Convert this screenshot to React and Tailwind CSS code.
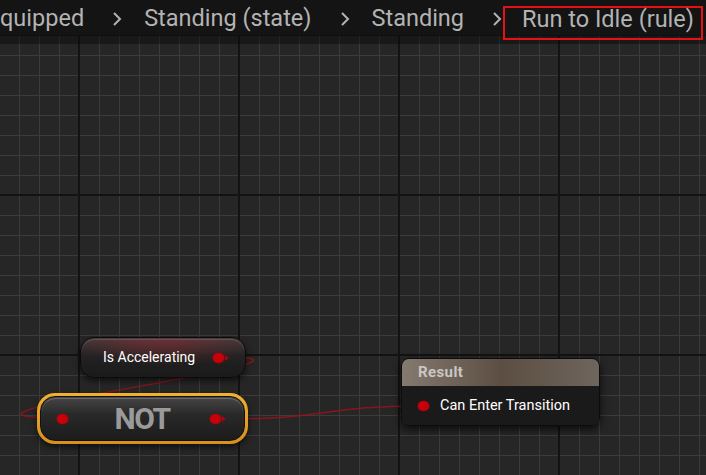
import React from 'react';

const Chevron = () => (
  <svg width="10" height="16" viewBox="0 0 10 16" className="mt-[11px] ml-[28px] mr-[22px] shrink-0">
    <polyline points="2,2 8,8 2,14" fill="none" stroke="#b3b3b3" strokeWidth="2" />
  </svg>
);

const Pin = ({ arrow = false }) => (
  <svg width="19" height="14" viewBox="0 0 19 14" className="shrink-0">
    <ellipse cx="6.5" cy="7" rx="6.5" ry="5.5" fill="#c00008" opacity="0.35" />
    <ellipse cx="6.5" cy="7" rx="5.5" ry="5" fill="#c8000a" />
    {arrow && <polygon points="13,4 17,7 13,10" fill="#b00008" />}
  </svg>
);

export default function App() {
  return (
    <div className="relative w-[706px] h-[475px] overflow-hidden bg-[#262626] bg-[linear-gradient(to_right,#131313_2px,transparent_2px),linear-gradient(to_bottom,#131313_2px,transparent_2px),linear-gradient(to_right,#3b3b3b_1px,transparent_1px),linear-gradient(to_bottom,#3b3b3b_1px,transparent_1px)] bg-[size:160px_160px,160px_160px,20px_20px,20px_20px] bg-[position:78px_34px,78px_34px,19px_15px,19px_15px] font-['Roboto',sans-serif]">
      {/* breadcrumb bar */}
      <div className="absolute top-0 left-0 right-0 h-[44px] flex items-start bg-[linear-gradient(to_bottom,#141414_35px,rgba(8,8,8,0.45)_35px)] text-[23.5px] text-[#b3b3b3] whitespace-nowrap">
        <span className="leading-[37px]">quipped</span>
        <Chevron />
        <span className="leading-[37px]">Standing (state)</span>
        <Chevron />
        <span className="leading-[37px]">Standing</span>
        <Chevron />
        <div className="mt-[6px] h-[34px] border-2 border-[#e81010] pl-[17px] pr-[7px] -ml-[21px]">
          <span className="block leading-[22px]">Run to Idle (rule)</span>
        </div>
      </div>

      {/* wires */}
      <svg className="absolute inset-0" width="706" height="475" viewBox="0 0 706 475">
        <path d="M 222 357 C 380 357, -120 418, 62 418" fill="none" stroke="#a3101c" strokeOpacity="0.75" strokeWidth="1.5" />
        <path d="M 226 419 C 330 419, 320 406, 423 406" fill="none" stroke="#a3101c" strokeOpacity="0.8" strokeWidth="1.5" />
      </svg>

      {/* Is Accelerating */}
      <div className="absolute left-[80px] top-[337px] w-[166px] h-[41px] rounded-[14px] border border-[#0b0b0b] shadow-[0_3px_6px_rgba(0,0,0,0.6)] bg-[radial-gradient(ellipse_60%_70%_at_50%_0%,rgba(150,40,50,0.55),transparent),linear-gradient(to_bottom,#3e3b3b,#242222_45%,#1a1a1a)] flex items-center pl-[22px] pr-[18px]">
        <div className="absolute inset-[1px] rounded-[13px] border-t border-[#5a5656]" />
        <span className="text-[14px] text-white">Is Accelerating</span>
        <div className="ml-auto mr-[-4px]">
          <Pin arrow />
        </div>
      </div>

      {/* NOT */}
      <div className="absolute left-[37px] top-[393px] w-[211px] h-[51px] rounded-[18px] bg-[linear-gradient(to_bottom,#f0b030,#d8901c)] p-[3px] shadow-[0_3px_6px_rgba(0,0,0,0.6)]">
        <div className="relative w-full h-full rounded-[15px] border border-[#111] bg-[linear-gradient(to_bottom,#474545,#2a2929_40%,#1c1c1c)] flex items-center pl-[15px] pr-[16px]">
          <div className="absolute inset-[1px] rounded-[14px] border-t border-[#6a6868]" />
          <Pin />
          <span className="flex-1 text-center text-[30px] font-bold text-[#9a9a9a] tracking-[-1.5px] leading-none">NOT</span>
          <Pin arrow />
        </div>
      </div>

      {/* Result */}
      <div className="absolute left-[401px] top-[358px] w-[199px] h-[68px] rounded-[8px] border border-[#0c0c0c] shadow-[0_3px_8px_rgba(0,0,0,0.7)] overflow-hidden flex flex-col">
        <div className="h-[27px] bg-[linear-gradient(to_right,#857a70,#5c4e42_50%,#6e655d)] flex items-center pl-[16px]">
          <span className="text-[15px] font-bold text-[#c9c6c3] tracking-[0.4px]">Result</span>
        </div>
        <div className="flex-1 bg-[#1b1a1a] flex items-center pl-[15px]">
          <Pin />
          <span className="ml-[4px] text-[14.5px] text-white">Can Enter Transition</span>
        </div>
      </div>
    </div>
  );
}
